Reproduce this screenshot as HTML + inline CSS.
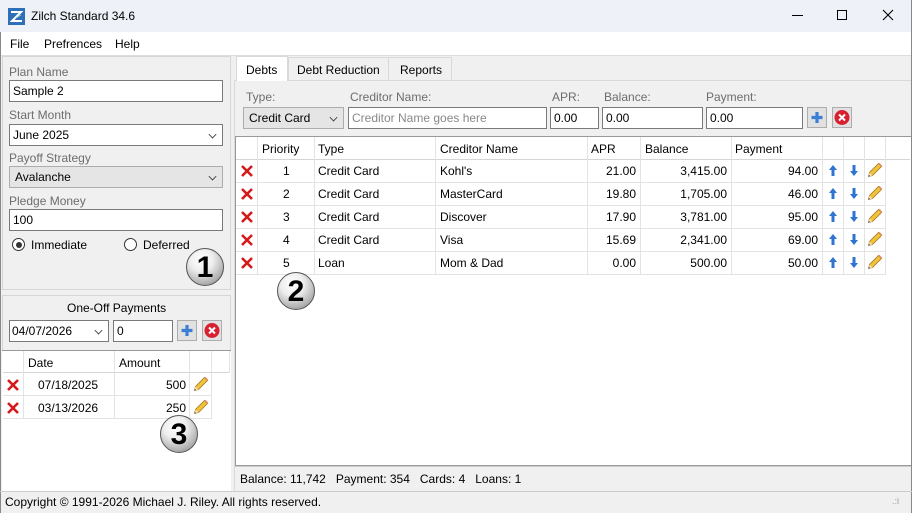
<!DOCTYPE html>
<html><head><meta charset="utf-8"><style>
*{box-sizing:border-box;margin:0;padding:0}
body{width:912px;height:513px;position:relative;overflow:hidden;background:#f0f0f0;font:12px "Liberation Sans",sans-serif;color:#000}
.a{position:absolute}
.t{position:absolute;white-space:nowrap;line-height:14px}
.g{color:#6d6d6d}
.in{position:absolute;background:#fff;border:1px solid #7a7a7a;padding:3px 0 0 3px;line-height:14px;white-space:nowrap}
.sel{position:absolute;border:1px solid #adadad;background:#e5e5e5;padding:3px 0 0 5px;line-height:14px}
.chev{position:absolute;right:6px;top:6px;width:7px;height:7px;border-right:1.3px solid #333;border-bottom:1.3px solid #333;transform:rotate(45deg) scale(.8)}
.btn{position:absolute;width:20px;height:21px;border:1px solid #adadad;background:#e1e1e1}
.badge{position:absolute;width:38px;height:38px;border-radius:50%;background:radial-gradient(circle at 40% 30%,#fff 0%,#eee 35%,#aaa 75%,#666 100%);border:1px solid #555;text-align:center;font:bold 30px/37px "Liberation Sans",sans-serif;color:#000}
.vl{position:absolute;width:1px;background:#e3e3e3}
.hl{position:absolute;height:1px;background:#e3e3e3}
.r{text-align:right}
</style></head><body>
<div class="a" style="left:0;top:0;width:912px;height:32px;background:#eef2f8"></div>
<svg class="a" style="left:8px;top:8px" width="17" height="17"><rect width="17" height="17" fill="#2f6fb8"/><path d="M3 4h10L4 13h10" stroke="#fff" stroke-width="2" fill="none"/><path d="M8 10l5-3" stroke="#9cc" stroke-width="1"/></svg>
<div class="t" style="left:31px;top:9px">Zilch Standard 34.6</div>
<div class="a" style="left:792px;top:15px;width:11px;height:1px;background:#000"></div>
<div class="a" style="left:837px;top:10px;width:10px;height:10px;border:1px solid #000"></div>
<svg class="a" style="left:882px;top:9px" width="12" height="12"><path d="M1 1L11 11M11 1L1 11" stroke="#000" stroke-width="1.1"/></svg>
<div class="a" style="left:0;top:32px;width:912px;height:24px;background:#fff;border-bottom:1px solid #ddd"></div>
<div class="t" style="left:10px;top:37px">File</div>
<div class="t" style="left:44px;top:37px">Prefrences</div>
<div class="t" style="left:115px;top:37px">Help</div>
<div class="a" style="left:911px;top:0;width:1px;height:513px;background:#888"></div>
<div class="a" style="left:0;top:32px;width:1px;height:481px;background:#888"></div>

<div class="a" style="left:2px;top:56px;width:229px;height:234px;border:1px solid #d6d6d6"></div>
<div class="t g" style="left:9px;top:65px">Plan Name</div>
<div class="in" style="left:9px;top:80px;width:214px;height:22px">Sample 2</div>
<div class="t g" style="left:9px;top:108px">Start Month</div>
<div class="in" style="left:9px;top:124px;width:214px;height:22px">June 2025<div class="chev"></div></div>
<div class="t g" style="left:9px;top:151px">Payoff Strategy</div>
<div class="sel" style="left:9px;top:166px;width:214px;height:22px">Avalanche<div class="chev"></div></div>
<div class="t g" style="left:9px;top:194px">Pledge Money</div>
<div class="in" style="left:9px;top:209px;width:214px;height:22px">100</div>
<div class="a" style="left:12px;top:238px;width:13px;height:13px;border-radius:50%;border:1px solid #333;background:#fff"></div>
<div class="a" style="left:15.5px;top:241.5px;width:6px;height:6px;border-radius:50%;background:#333"></div>
<div class="t" style="left:31px;top:238px">Immediate</div>
<div class="a" style="left:124px;top:238px;width:13px;height:13px;border-radius:50%;border:1px solid #333;background:#fff"></div>
<div class="t" style="left:143px;top:238px">Deferred</div>
<div class="badge" style="left:186px;top:248px">1</div>

<div class="a" style="left:2px;top:295px;width:229px;height:196px;border:1px solid #d6d6d6"></div>
<div class="t" style="left:67px;top:301px">One-Off Payments</div>
<div class="in" style="left:9px;top:320px;width:100px;height:22px;padding-left:2px">04/07/2026<div class="chev" style="background:none"></div></div>
<div class="in" style="left:113px;top:320px;width:60px;height:22px">0</div>
<div class="btn" style="left:177px;top:320px"><svg width="18" height="19"><path d="M9 4v11M3.5 9.5h11" stroke="#3a7fd5" stroke-width="3.2"/></svg></div>
<div class="btn" style="left:202px;top:320px"><svg width="18" height="19"><circle cx="9" cy="9.5" r="7.5" fill="#d82030"/><path d="M6 6.5l6 6M12 6.5l-6 6" stroke="#fff" stroke-width="2"/></svg></div>
<div class="a" style="left:2px;top:350px;width:229px;height:141px;background:#fff;border-top:1px solid #999"></div>
<div class="hl" style="left:3px;top:372px;width:226px;background:#d5d5d5"></div>
<div class="hl" style="left:3px;top:395px;width:208px"></div>
<div class="hl" style="left:3px;top:418px;width:208px"></div>
<div class="vl" style="left:23px;top:351px;height:68px"></div>
<div class="vl" style="left:114px;top:351px;height:68px"></div>
<div class="vl" style="left:189px;top:351px;height:68px"></div>
<div class="vl" style="left:211px;top:351px;height:68px"></div>
<div class="vl" style="left:229px;top:351px;height:22px"></div>
<div class="t" style="left:28px;top:356px">Date</div>
<div class="t" style="left:119px;top:356px">Amount</div>
<div class="t" style="left:38px;top:378px">07/18/2025</div><div class="t r" style="left:120px;top:378px;width:66px">500</div>
<div class="t" style="left:38px;top:401px">03/13/2026</div><div class="t r" style="left:120px;top:401px;width:66px">250</div>

<div class="badge" style="left:160px;top:415px">3</div>

<div class="a" style="left:0;top:491px;width:912px;height:22px;border-top:1px solid #ccc"></div>
<div class="t" style="left:5px;top:495px">Copyright © 1991-2026 Michael J. Riley. All rights reserved.</div>
<div class="t" style="left:892px;top:494px;color:#999;font-size:9px">.:i</div>

<div class="a" style="left:234px;top:80px;width:677px;height:1px;background:#d9d9d9"></div>
<div class="a" style="left:236px;top:56px;width:52px;height:25px;background:#fff;border:1px solid #d9d9d9;border-bottom:none"></div>
<div class="t" style="left:246px;top:63px">Debts</div>
<div class="a" style="left:288px;top:57px;width:101px;height:23px;border:1px solid #d9d9d9;border-bottom:none"></div>
<div class="t" style="left:297px;top:63px">Debt Reduction</div>
<div class="a" style="left:389px;top:57px;width:63px;height:23px;border:1px solid #d9d9d9;border-bottom:none;border-left:none"></div>
<div class="t" style="left:400px;top:63px">Reports</div>
<div class="a" style="left:234px;top:80px;width:1px;height:411px;background:#d9d9d9"></div>

<div class="t g" style="left:246px;top:90px">Type:</div>
<div class="t g" style="left:350px;top:90px">Creditor Name:</div>
<div class="t g" style="left:552px;top:90px">APR:</div>
<div class="t g" style="left:604px;top:90px">Balance:</div>
<div class="t g" style="left:706px;top:90px">Payment:</div>
<div class="sel" style="left:243px;top:107px;width:101px;height:22px">Credit Card<div class="chev"></div></div>
<div class="in" style="left:348px;top:107px;width:199px;height:22px;color:#888">Creditor Name goes here</div>
<div class="in" style="left:550px;top:107px;width:49px;height:22px">0.00</div>
<div class="in" style="left:602px;top:107px;width:101px;height:22px">0.00</div>
<div class="in" style="left:706px;top:107px;width:97px;height:22px">0.00</div>
<div class="btn" style="left:807px;top:107px"><svg width="18" height="19"><path d="M9 4v11M3.5 9.5h11" stroke="#3a7fd5" stroke-width="3.2"/></svg></div>
<div class="btn" style="left:832px;top:107px"><svg width="18" height="19"><circle cx="9" cy="9.5" r="7.5" fill="#d82030"/><path d="M6 6.5l6 6M12 6.5l-6 6" stroke="#fff" stroke-width="2"/></svg></div>

<div class="a" style="left:235px;top:136px;width:676px;height:330px;background:#fff;border:1px solid #999;border-right:none"></div>
<div class="hl" style="left:236px;top:159px;width:674px;background:#d5d5d5"></div>
<div class="hl" style="left:236px;top:182px;width:650px"></div>
<div class="hl" style="left:236px;top:205px;width:650px"></div>
<div class="hl" style="left:236px;top:228px;width:650px"></div>
<div class="hl" style="left:236px;top:251px;width:650px"></div>
<div class="hl" style="left:236px;top:274px;width:650px"></div>
<div class="vl" style="left:257px;top:137px;height:138px"></div>
<div class="vl" style="left:314px;top:137px;height:138px"></div>
<div class="vl" style="left:435px;top:137px;height:138px"></div>
<div class="vl" style="left:587px;top:137px;height:138px"></div>
<div class="vl" style="left:640px;top:137px;height:138px"></div>
<div class="vl" style="left:731px;top:137px;height:138px"></div>
<div class="vl" style="left:822px;top:137px;height:138px"></div>
<div class="vl" style="left:843px;top:137px;height:138px"></div>
<div class="vl" style="left:864px;top:137px;height:138px"></div>
<div class="vl" style="left:885px;top:137px;height:138px"></div>
<div class="t" style="left:262px;top:142px">Priority</div>
<div class="t" style="left:318px;top:142px">Type</div>
<div class="t" style="left:440px;top:142px">Creditor Name</div>
<div class="t" style="left:591px;top:142px">APR</div>
<div class="t" style="left:645px;top:142px">Balance</div>
<div class="t" style="left:735px;top:142px">Payment</div>

<div class="t" style="left:283px;top:164px">1</div><div class="t" style="left:318px;top:164px">Credit Card</div><div class="t" style="left:440px;top:164px">Kohl's</div><div class="t r" style="left:590px;top:164px;width:46px">21.00</div><div class="t r" style="left:643px;top:164px;width:84px">3,415.00</div><div class="t r" style="left:734px;top:164px;width:84px">94.00</div>
<div class="t" style="left:283px;top:187px">2</div><div class="t" style="left:318px;top:187px">Credit Card</div><div class="t" style="left:440px;top:187px">MasterCard</div><div class="t r" style="left:590px;top:187px;width:46px">19.80</div><div class="t r" style="left:643px;top:187px;width:84px">1,705.00</div><div class="t r" style="left:734px;top:187px;width:84px">46.00</div>
<div class="t" style="left:283px;top:210px">3</div><div class="t" style="left:318px;top:210px">Credit Card</div><div class="t" style="left:440px;top:210px">Discover</div><div class="t r" style="left:590px;top:210px;width:46px">17.90</div><div class="t r" style="left:643px;top:210px;width:84px">3,781.00</div><div class="t r" style="left:734px;top:210px;width:84px">95.00</div>
<div class="t" style="left:283px;top:233px">4</div><div class="t" style="left:318px;top:233px">Credit Card</div><div class="t" style="left:440px;top:233px">Visa</div><div class="t r" style="left:590px;top:233px;width:46px">15.69</div><div class="t r" style="left:643px;top:233px;width:84px">2,341.00</div><div class="t r" style="left:734px;top:233px;width:84px">69.00</div>
<div class="t" style="left:283px;top:256px">5</div><div class="t" style="left:318px;top:256px">Loan</div><div class="t" style="left:440px;top:256px">Mom &amp; Dad</div><div class="t r" style="left:590px;top:256px;width:46px">0.00</div><div class="t r" style="left:643px;top:256px;width:84px">500.00</div><div class="t r" style="left:734px;top:256px;width:84px">50.00</div>

<svg class="a" style="left:0;top:0" width="912" height="420">
<defs>
<g id="x"><path d="M2 2l10 10M12 2L2 12" stroke="#d51a1a" stroke-width="2.6"/></g>
<g id="up"><path d="M5 1L1 6h2.5v6h3V6H9z" fill="#2e74d0"/></g>
<g id="dn"><path d="M5 12L1 7h2.5V1h3v6H9z" fill="#2e74d0"/></g>
<g id="pe"><path d="M1.5 14.5l1-4 9-9 3 3-9 9z" fill="#f2c23a" stroke="#a07a20" stroke-width=".8"/><path d="M11.5 1.5l3 3 .8-.8-3-3z" fill="#e88"/><path d="M1.5 14.5l1-4 3 3z" fill="#f5deb3"/><path d="M1.5 14.5l.4-1.6 1.2 1.2z" fill="#333"/></g>
</defs>
<use href="#x" x="240" y="164"/><use href="#x" x="240" y="187"/><use href="#x" x="240" y="210"/><use href="#x" x="240" y="233"/><use href="#x" x="240" y="256"/>
<use href="#x" x="6" y="378"/><use href="#x" x="6" y="401"/>
<use href="#up" x="828" y="164"/><use href="#up" x="828" y="187"/><use href="#up" x="828" y="210"/><use href="#up" x="828" y="233"/><use href="#up" x="828" y="256"/>
<use href="#dn" x="849" y="164"/><use href="#dn" x="849" y="187"/><use href="#dn" x="849" y="210"/><use href="#dn" x="849" y="233"/><use href="#dn" x="849" y="256"/>
<use href="#pe" x="867" y="162"/><use href="#pe" x="867" y="185"/><use href="#pe" x="867" y="208"/><use href="#pe" x="867" y="231"/><use href="#pe" x="867" y="254"/>
<use href="#pe" x="193" y="376"/><use href="#pe" x="193" y="399"/>
</svg>
<div class="badge" style="left:277px;top:272px">2</div>

<div class="a" style="left:235px;top:466px;width:676px;height:25px;border-top:1px solid #ccc"></div>
<div class="t" style="left:240px;top:472px">Balance: 11,742&nbsp;&nbsp; Payment: 354&nbsp;&nbsp; Cards: 4&nbsp;&nbsp; Loans: 1</div>
</body></html>
